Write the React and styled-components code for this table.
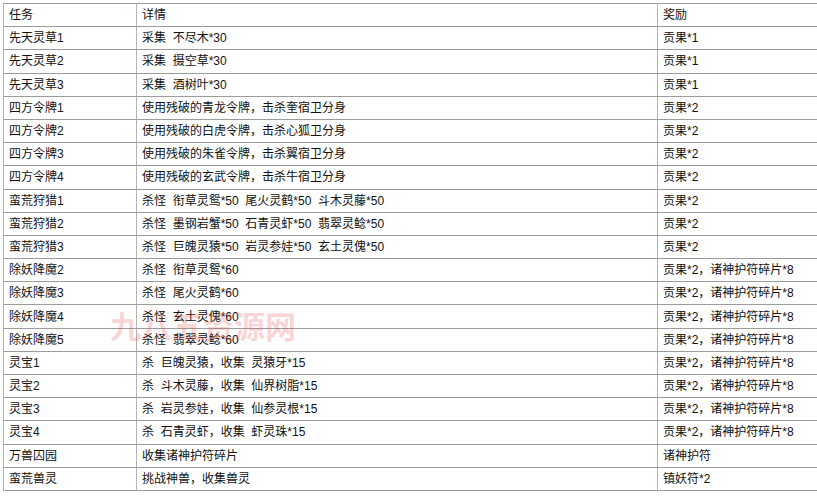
import React from "react";
import styled, { createGlobalStyle } from "styled-components";

const rows = [
  ["先天灵草1", "采集  不尽木*30", "贡果*1"],
  ["先天灵草2", "采集  摄空草*30", "贡果*1"],
  ["先天灵草3", "采集  酒树叶*30", "贡果*1"],
  ["四方令牌1", "使用残破的青龙令牌，击杀奎宿卫分身", "贡果*2"],
  ["四方令牌2", "使用残破的白虎令牌，击杀心狐卫分身", "贡果*2"],
  ["四方令牌3", "使用残破的朱雀令牌，击杀翼宿卫分身", "贡果*2"],
  ["四方令牌4", "使用残破的玄武令牌，击杀牛宿卫分身", "贡果*2"],
  ["蛮荒狩猎1", "杀怪  衔草灵鸳*50  尾火灵鹤*50  斗木灵藤*50", "贡果*2"],
  ["蛮荒狩猎2", "杀怪  墨钢岩蟹*50  石青灵虾*50  翡翠灵鲶*50", "贡果*2"],
  ["蛮荒狩猎3", "杀怪  巨魄灵猿*50  岩灵参娃*50  玄土灵傀*50", "贡果*2"],
  ["除妖降魔2", "杀怪  衔草灵鸳*60", "贡果*2，诸神护符碎片*8"],
  ["除妖降魔3", "杀怪  尾火灵鹤*60", "贡果*2，诸神护符碎片*8"],
  ["除妖降魔4", "杀怪  玄土灵傀*60", "贡果*2，诸神护符碎片*8"],
  ["除妖降魔5", "杀怪  翡翠灵鲶*60", "贡果*2，诸神护符碎片*8"],
  ["灵宝1", "杀  巨魄灵猿，收集  灵猿牙*15", "贡果*2，诸神护符碎片*8"],
  ["灵宝2", "杀  斗木灵藤，收集  仙界树脂*15", "贡果*2，诸神护符碎片*8"],
  ["灵宝3", "杀  岩灵参娃，收集  仙参灵根*15", "贡果*2，诸神护符碎片*8"],
  ["灵宝4", "杀  石青灵虾，收集  虾灵珠*15", "贡果*2，诸神护符碎片*8"],
  ["万兽囚园", "收集诸神护符碎片", "诸神护符"],
  ["蛮荒兽灵", "挑战神兽，收集兽灵", "镇妖符*2"],
];

const GlobalStyle = createGlobalStyle`
  html, body {
    margin: 0;
    background: #ffffff;
    overflow: hidden;
  }
`;

const Page = styled.div`
  position: relative;
  width: 817px;
  height: 500px;
  padding: 3px 0 0 3px;
  box-sizing: border-box;
  overflow: hidden;
  font-family: "Liberation Sans", "Noto Sans CJK SC", sans-serif;
  font-size: 12px;
  color: #111;
`;

const Table = styled.table`
  border-collapse: collapse;
`;

const Cell = styled.td`
  width: ${(p) => p.$w}px;
  min-width: ${(p) => p.$w}px;
  max-width: ${(p) => p.$w}px;
  height: 22.2px;
  padding: 0 0 0 5px;
  border: 1px solid #9c9c9c;
  border-right-color: #b4b4b4;
  border-left-color: #b4b4b4;
  white-space: pre;
  vertical-align: middle;
  line-height: 20px;
  overflow: hidden;
`;

const Watermark = styled.div`
  position: absolute;
  left: 110px;
  top: 302px;
  font-family: "Noto Sans CJK SC", sans-serif;
  font-size: 31px;
  font-weight: 700;
  color: rgba(226, 70, 70, 0.24);
  pointer-events: none;
  white-space: nowrap;
`;

const widths = [127, 515, 200];

export default function App() {
  return (
    <Page>
      <GlobalStyle />
      <Table>
        <tbody>
          <tr>
            <Cell $w={widths[0]}>任务</Cell>
            <Cell $w={widths[1]}>详情</Cell>
            <Cell $w={widths[2]}>奖励</Cell>
          </tr>
          {rows.map((r) => (
            <tr key={r[0]}>
              {r.map((c, i) => (
                <Cell key={i} $w={widths[i]}>
                  {c}
                </Cell>
              ))}
            </tr>
          ))}
        </tbody>
      </Table>
      <Watermark>九八五资源网</Watermark>
    </Page>
  );
}
